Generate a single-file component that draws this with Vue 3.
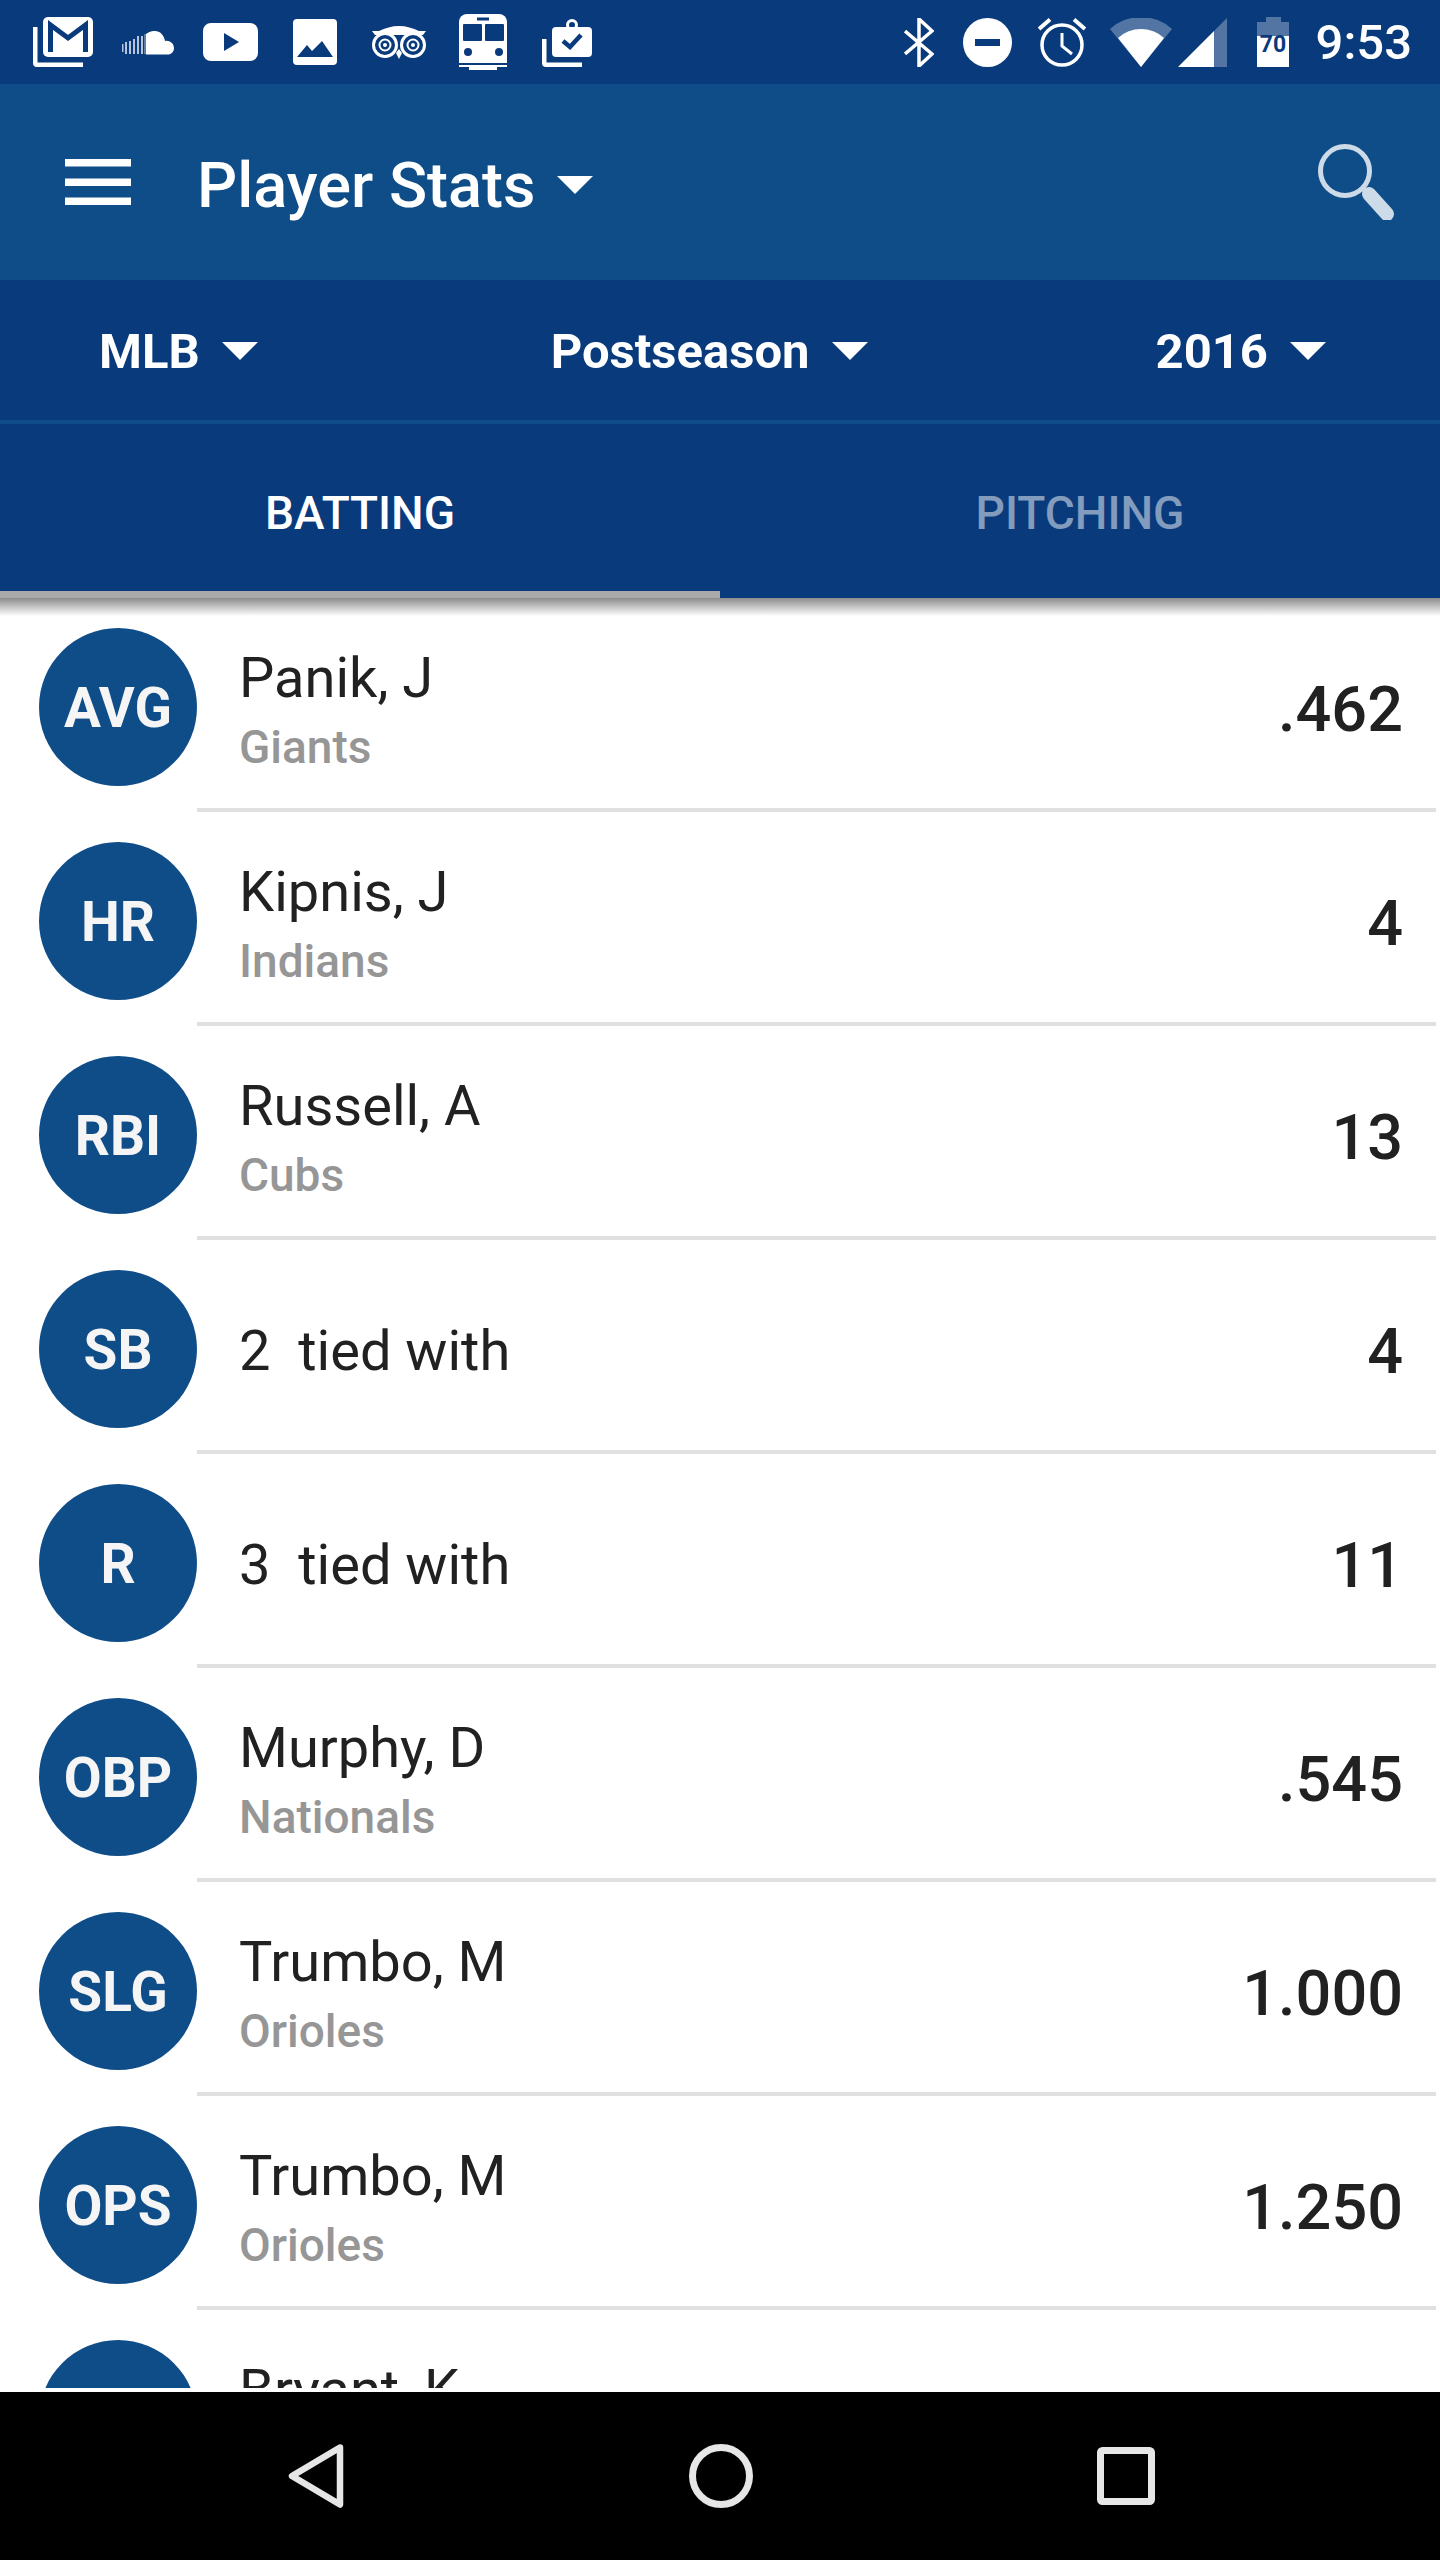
<template>
  <div class="phone">
    <div class="status">
      <svg class="ic-mail" width="60" height="50" viewBox="0 0 60 50">
        <path d="M0 10h4.500v35.500h45.500V50H4a4 4 0 0 1-4-4z" fill="#fff"/>
        <rect x="10" y="0" width="50" height="40" rx="5" fill="#fff"/>
        <path d="M17.500 35V8L35 21 52.500 8v27" fill="none" stroke="#083a7c" stroke-width="5"/>
      </svg>
      <svg class="ic-cloud" width="52" height="24" viewBox="0 0 52 24">
        <path d="M0 13h1.500v8H0zM3 11h2v12H3zM7 10h2v13H7zM11 8h2v15h-2zM15 5h2v18h-2zM19 5h2v18h-2zM22.500 3h1v20h-1z" fill="#fff" opacity=".7"/>
        <path d="M24 3C27 .5 31 0 33 0c5 0 9 4 10 10 4-1 9 2 9 7 0 4-3 6.500-6 6.500H24z" fill="#fff"/>
      </svg>
      <svg class="ic-play" width="55" height="38" viewBox="0 0 55 38">
        <path d="M8 0h39a8 8 0 0 1 8 8v22a8 8 0 0 1-8 8H8a8 8 0 0 1-8-8V8a8 8 0 0 1 8-8z" fill="#fff"/>
        <path d="M21 10l15 9-15 9z" fill="#083a7c"/>
      </svg>
      <svg class="ic-photo" width="44" height="46" viewBox="0 0 44 46">
        <rect width="44" height="46" rx="4" fill="#fff"/>
        <path d="M4 38l10-12 5 6 10-10 11 16z" fill="#083a7c"/>
      </svg>
      <svg class="ic-owl" width="54" height="34" viewBox="0 0 54 34">
        <path d="M0 5h7C13 2 20 0 27 0s14 2 20 5h7l-3 4H3z" fill="#fff"/>
        <g fill="none" stroke="#fff">
          <circle cx="13" cy="19" r="11.500" stroke-width="3"/>
          <circle cx="41" cy="19" r="11.500" stroke-width="3"/>
          <circle cx="13" cy="19" r="5.500" stroke-width="2"/>
          <circle cx="41" cy="19" r="5.500" stroke-width="2"/>
        </g>
        <circle cx="13" cy="19" r="2" fill="#fff"/>
        <circle cx="41" cy="19" r="2" fill="#fff"/>
        <path d="M24 27l3 6 3-6-3-4z" fill="#fff"/>
      </svg>
      <svg class="ic-train" width="48" height="56" viewBox="0 0 48 56">
        <path d="M8 0h32a8 8 0 0 1 8 8v41H0V8a8 8 0 0 1 8-8z" fill="#fff"/>
        <path d="M0 51h48v2H38v3H10v-3H0z" fill="#fff"/>
        <g fill="#083a7c">
          <rect x="18" y="3.500" width="12" height="3"/>
          <rect x="4" y="10" width="19" height="17" rx="1"/>
          <rect x="26" y="10" width="19" height="17" rx="1"/>
          <circle cx="9" cy="38" r="4"/>
          <circle cx="40" cy="38" r="4"/>
        </g>
      </svg>
      <svg class="ic-clip" width="50" height="48" viewBox="0 0 50 48">
        <path d="M0 20h4.500v23.500H40V48H4a4 4 0 0 1-4-4z" fill="#fff"/>
        <circle cx="30" cy="6" r="4.500" fill="none" stroke="#fff" stroke-width="3"/>
        <rect x="10" y="8" width="40" height="30" rx="4" fill="#fff"/>
        <path d="M21 22l7 6 11-12" fill="none" stroke="#083a7c" stroke-width="4.500"/>
      </svg>

      <span class="status-space"></span>

      <svg class="ic-bt" width="30" height="49" viewBox="0 0 30 49">
        <path d="M1 13l27 23-13 12V1l13 12L1 36" fill="none" stroke="#fff" stroke-width="3.500"/>
      </svg>
      <svg class="ic-dnd" width="49" height="49" viewBox="0 0 49 49">
        <circle cx="24.500" cy="24.500" r="24.500" fill="#fff"/>
        <rect x="12" y="21" width="25" height="7" fill="#083a7c"/>
      </svg>
      <svg class="ic-alarm" width="48" height="49" viewBox="0 0 48 49">
        <circle cx="24" cy="27" r="20" fill="none" stroke="#fff" stroke-width="3.500"/>
        <path d="M24 15v13l10 8" fill="none" stroke="#fff" stroke-width="3"/>
        <path d="M1 11L12 1.500M47 11L36 1.500" fill="none" stroke="#fff" stroke-width="4"/>
      </svg>
      <svg class="ic-wifi" width="62" height="49" viewBox="0 0 62 49">
        <path d="M0 11a46 46 0 0 1 62 0L31 49z" fill="#fff" opacity=".3"/>
        <path d="M8 20a34 34 0 0 1 46 0L31 49z" fill="#fff"/>
      </svg>
      <svg class="ic-signal" width="49" height="49" viewBox="0 0 49 49">
        <path d="M36 13L49 0v49H36z" fill="#fff" opacity=".3"/>
        <path d="M0 49l36-36v36z" fill="#fff"/>
      </svg>
      <svg class="ic-batt" width="32" height="50" viewBox="0 0 32 50">
        <path d="M9 0h15v5h8v14H0V5h9z" fill="#fff" opacity=".3"/>
        <rect y="19" width="32" height="31" fill="#fff"/>
        <text x="16" y="35" text-anchor="middle" class="batt-num">70</text>
      </svg>
      <span class="clock">9:53</span>
    </div>

    <div class="appbar">
      <svg width="66" height="46" viewBox="0 0 66 46">
        <path d="M0 0h66v7.500H0zM0 19.500h66V27H0zM0 38.500h66V46H0z" fill="#fff"/>
      </svg>
      <span class="title">Player Stats</span>
      <span class="caret title-caret"></span>
      <span class="spacer"></span>
      <svg width="76" height="76" viewBox="0 0 76 76">
        <circle cx="27" cy="27" r="24.500" fill="none" stroke="#cddae8" stroke-width="5"/>
        <path d="M44 47l3-3" stroke="#cddae8" stroke-width="5"/>
        <path d="M51 50l18 20" stroke="#cddae8" stroke-width="14" stroke-linecap="round"/>
      </svg>
    </div>

    <div class="filters">
      <div v-for="f in filters" :key="f" class="filter">
        <span>{{ f }}</span>
        <span class="caret"></span>
      </div>
    </div>

    <div class="tabs">
      <div class="tab active">BATTING</div>
      <div class="tab">PITCHING</div>
    </div>

    <div class="list-wrap">
      <div class="list">
        <div v-for="row in rows" :key="row.stat + row.name" class="row">
          <div class="badge">{{ row.stat }}</div>
          <div class="row-body">
            <div class="who">
              <div class="name">{{ row.name }}</div>
              <div v-if="row.team" class="team">{{ row.team }}</div>
            </div>
            <div class="value">{{ row.value }}</div>
          </div>
        </div>
      </div>
      <div class="shade"></div>
    </div>

    <div class="navbar">
      <svg width="56" height="64" viewBox="0 0 56 64">
        <path d="M52 3.500L4 32l48 28.500z" fill="none" stroke="#e6e6e6" stroke-width="6.500" stroke-linejoin="round"/>
      </svg>
      <svg class="nav-home" width="64" height="64" viewBox="0 0 64 64">
        <circle cx="32" cy="32" r="28.500" fill="none" stroke="#e6e6e6" stroke-width="7"/>
      </svg>
      <svg class="nav-recent" width="58" height="58" viewBox="0 0 58 58">
        <rect x="3.500" y="3.500" width="51" height="51" rx="2" fill="none" stroke="#e6e6e6" stroke-width="7"/>
      </svg>
    </div>
  </div>
</template>

<script setup>
const filters = ["MLB", "Postseason", "2016"];

// the last row is cut off by the nav bar, only the top of its name shows
const rows = [
  { stat: "AVG", name: "Panik, J", team: "Giants", value: ".462" },
  { stat: "HR", name: "Kipnis, J", team: "Indians", value: "4" },
  { stat: "RBI", name: "Russell, A", team: "Cubs", value: "13" },
  { stat: "SB", name: "2  tied with", value: "4" },
  { stat: "R", name: "3  tied with", value: "11" },
  { stat: "OBP", name: "Murphy, D", team: "Nationals", value: ".545" },
  { stat: "SLG", name: "Trumbo, M", team: "Orioles", value: "1.000" },
  { stat: "OPS", name: "Trumbo, M", team: "Orioles", value: "1.250" },
  { stat: "", name: "Bryant, K", team: " ", value: "" },
];
</script>

<style scoped>
.phone {
  width: 1440px;
  height: 2560px;
  display: flex;
  flex-direction: column;
  background: #fff;
  font-family: Roboto, sans-serif;
  overflow: hidden;
}

.status {
  height: 84px;
  flex: none;
  display: flex;
  align-items: center;
  padding: 0 28px 0 33px;
  background: #083a7c;
  color: #fff;
}
.status svg {
  flex: none;
}
.ic-cloud { margin-left: 29px; margin-top: 2px; }
.ic-play { margin-left: 29px; }
.ic-photo { margin-left: 35px; }
.ic-owl { margin-left: 35px; margin-top: 2px; }
.ic-train { margin-left: 33px; }
.ic-clip { margin-left: 35px; margin-top: 2px; }
.status-space { flex: 1; }
.ic-dnd { margin-left: 29px; }
.ic-alarm { margin-left: 26px; }
.ic-wifi { margin-left: 24px; }
.ic-signal { margin-left: 6px; }
.ic-batt { margin-left: 30px; }
.batt-num {
  font-family: Roboto, sans-serif;
  font-size: 23px;
  font-weight: 700;
  fill: #083a7c;
}
.clock {
  margin-left: 27px;
  font-size: 49px;
  font-weight: 500;
}

.appbar {
  height: 196px;
  flex: none;
  display: flex;
  align-items: center;
  padding: 0 46px 0 65px;
  background: #0f4d89;
  color: #fff;
}
.title {
  margin: 6px 0 0 66px;
  font-size: 63px;
  font-weight: 500;
}
.title-caret {
  margin: 6px 0 0 22px;
}
.spacer { flex: 1; }

.caret {
  width: 0;
  height: 0;
  border-left: 18px solid transparent;
  border-right: 18px solid transparent;
  border-top: 18px solid #fff;
}

.filters {
  height: 138px;
  flex: none;
  display: flex;
  align-items: center;
  justify-content: space-between;
  padding: 2px 114px 0 99px;
  background: #083a7c;
  border-bottom: 4px solid #0f4d89;
  color: #fff;
  font-size: 49px;
  font-weight: 700;
}
.filter {
  display: flex;
  align-items: center;
  gap: 22px;
}
.filter:nth-child(2) {
  margin-left: 5px;
}

.tabs {
  height: 174px;
  flex: none;
  display: flex;
  background: #083a7c;
}
.tab {
  flex: 1;
  display: flex;
  align-items: center;
  justify-content: center;
  padding: 10px 0 7px;
  font-size: 46px;
  font-weight: 500;
  color: rgba(255, 255, 255, 0.5);
}
.tab.active {
  color: #fff;
  padding-bottom: 0;
  border-bottom: 7px solid #aaa;
}

.list-wrap {
  position: relative;
  height: 1794px;
  flex: none;
  padding-bottom: 4px;
  box-sizing: border-box;
}
.list {
  height: 1790px;
  overflow: hidden;
}
.shade {
  position: absolute;
  top: 0;
  left: 0;
  right: 0;
  height: 18px;
  background: linear-gradient(#8c8c8c, rgba(255, 255, 255, 0));
}

.row {
  height: 214px;
  display: flex;
}
.badge {
  flex: none;
  width: 158px;
  height: 158px;
  margin: 30px 0 0 39px;
  padding-top: 2px;
  box-sizing: border-box;
  display: flex;
  align-items: center;
  justify-content: center;
  border-radius: 50%;
  background: #0f4d89;
  color: #f5f5f5;
  font-size: 55px;
  font-weight: 700;
}
.row-body {
  flex: 1;
  margin-right: 4px;
  padding: 12px 33px 0 42px;
  display: flex;
  align-items: center;
  justify-content: space-between;
  border-bottom: 4px solid #e0e0e0;
}
.name {
  font-size: 56px;
  line-height: 72px;
  color: #212121;
  white-space: pre;
}
.team {
  min-height: 60px;
  margin-top: 3px;
  font-size: 46px;
  line-height: 60px;
  font-weight: 500;
  color: #969696;
}
.value {
  font-size: 63px;
  font-weight: 500;
  color: #212121;
}

.navbar {
  height: 168px;
  flex: none;
  display: flex;
  align-items: center;
  padding-left: 288px;
  background: #000;
}
.nav-home { margin-left: 345px; }
.nav-recent { margin-left: 344px; }
</style>

<style>
body {
  background: #fff;
}
</style>
